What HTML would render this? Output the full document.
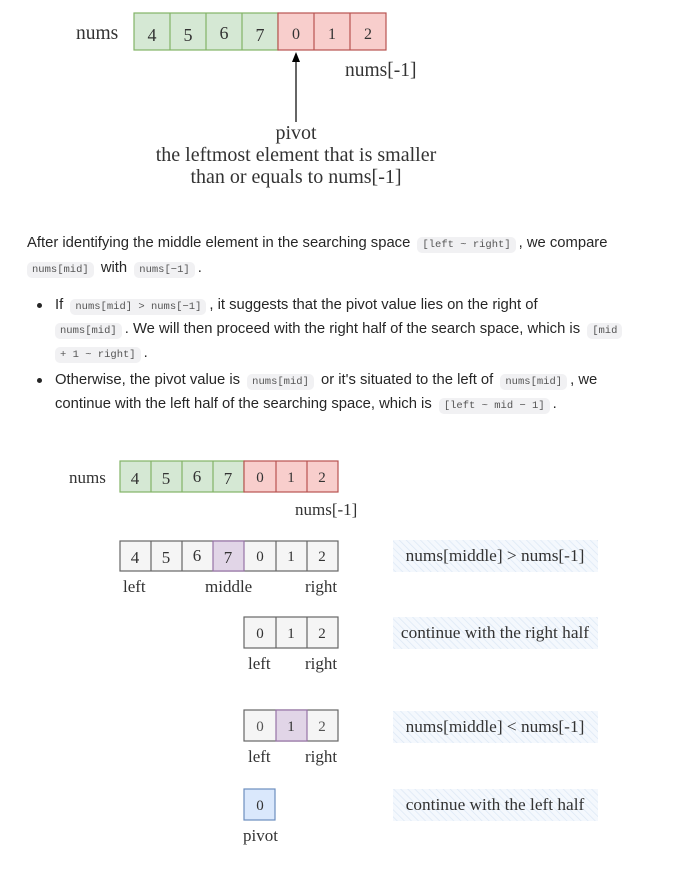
<!DOCTYPE html>
<html><head><meta charset="utf-8"><style>
html,body{margin:0;padding:0;background:#fff;width:681px;height:876px;overflow:hidden;position:relative}
.t{position:absolute;font-family:"Liberation Sans",sans-serif;font-size:14.8px;color:#262626;white-space:nowrap;line-height:20px}
code{font-family:"Liberation Mono",monospace;font-size:10.5px;color:#555;background:#f1f1f3;border-radius:5px;padding:2px 5px;margin:0 3px}
.b{position:absolute;width:5px;height:5px;border-radius:50%;background:#262626}
svg{position:absolute;left:0;top:0}
svg text{font-family:"Liberation Serif",serif;fill:#333}
</style></head><body>
<svg width="681" height="876" xmlns="http://www.w3.org/2000/svg">
<defs>
<pattern id="h" width="5" height="5" patternUnits="userSpaceOnUse" patternTransform="rotate(-45)">
<rect width="5" height="5" fill="#f4f8fd"/><line x1="0" y1="0" x2="0" y2="5" stroke="#dde8f5" stroke-width="1.5"/>
</pattern>
</defs>
<g stroke-width="1.2">
<rect x="134" y="13" width="144" height="37" fill="#d5e8d4" stroke="#82b366"/>
<line x1="170" y1="13" x2="170" y2="50" stroke="#82b366"/><line x1="206" y1="13" x2="206" y2="50" stroke="#82b366"/><line x1="242" y1="13" x2="242" y2="50" stroke="#82b366"/>
<rect x="278" y="13" width="108" height="37" fill="#f8cecc" stroke="#b85450"/>
<line x1="314" y1="13" x2="314" y2="50" stroke="#b85450"/><line x1="350" y1="13" x2="350" y2="50" stroke="#b85450"/>
</g>
<g font-size="18" text-anchor="middle">
<text x="152" y="41">4</text><text x="188" y="41">5</text><text x="224" y="39">6</text><text x="260" y="41">7</text>
<text x="296" y="39" font-size="16">0</text><text x="332" y="39" font-size="16">1</text><text x="368" y="39" font-size="16">2</text>
</g>
<text x="76" y="39" font-size="19.5">nums</text>
<text x="345" y="76" font-size="19.5">nums[-1]</text>
<line x1="296" y1="60" x2="296" y2="122" stroke="#000" stroke-width="1.2"/>
<path d="M292 62 L296 52 L300 62 Z" fill="#000"/>
<g font-size="20" text-anchor="middle">
<text x="296" y="139">pivot</text>
<text x="296" y="161">the leftmost element that is smaller</text>
<text x="296" y="183">than or equals to nums[-1]</text>
</g>
<g stroke-width="1.2">
<rect x="120" y="461" width="124" height="31" fill="#d5e8d4" stroke="#82b366"/>
<line x1="151" y1="461" x2="151" y2="492" stroke="#82b366"/><line x1="182" y1="461" x2="182" y2="492" stroke="#82b366"/><line x1="213" y1="461" x2="213" y2="492" stroke="#82b366"/>
<rect x="244" y="461" width="94" height="31" fill="#f8cecc" stroke="#b85450"/>
<line x1="276" y1="461" x2="276" y2="492" stroke="#b85450"/><line x1="307" y1="461" x2="307" y2="492" stroke="#b85450"/>
</g>
<g font-size="17" text-anchor="middle">
<text x="135" y="484">4</text><text x="166" y="484">5</text><text x="197" y="482">6</text><text x="228" y="484">7</text>
<text x="260" y="482" font-size="15">0</text><text x="291" y="482" font-size="15">1</text><text x="322" y="482" font-size="15">2</text>
</g>
<text x="69" y="483" font-size="17">nums</text>
<text x="295" y="515" font-size="17">nums[-1]</text>
<g stroke="#666" stroke-width="1.2">
<rect x="120" y="541" width="218" height="30" fill="#f5f5f5"/>
<rect x="213" y="541" width="31" height="30" fill="#e1d5e7" stroke="#9673a6"/>
<line x1="151" y1="541" x2="151" y2="571"/><line x1="182" y1="541" x2="182" y2="571"/><line x1="276" y1="541" x2="276" y2="571"/><line x1="307" y1="541" x2="307" y2="571"/>
</g>
<g font-size="17" text-anchor="middle" style="fill:#555">
<text x="135" y="563">4</text><text x="166" y="563">5</text><text x="197" y="561">6</text><text x="228" y="563">7</text>
<text x="260" y="561" font-size="15">0</text><text x="291" y="561" font-size="15">1</text><text x="322" y="561" font-size="15">2</text>
</g>
<text x="123" y="592" font-size="17">left</text><text x="205" y="592" font-size="17">middle</text><text x="305" y="592" font-size="17">right</text>
<rect x="393" y="540" width="205" height="32" fill="url(#h)"/>
<text x="495" y="561" font-size="17.3" text-anchor="middle">nums[middle] &gt; nums[-1]</text>
<g stroke="#666" stroke-width="1.2">
<rect x="244" y="617" width="94" height="31" fill="#f5f5f5"/>
<line x1="276" y1="617" x2="276" y2="648"/><line x1="307" y1="617" x2="307" y2="648"/>
</g>
<g font-size="15" text-anchor="middle" style="fill:#555">
<text x="260" y="638">0</text><text x="291" y="638">1</text><text x="322" y="638">2</text>
</g>
<text x="248" y="669" font-size="17">left</text><text x="305" y="669" font-size="17">right</text>
<rect x="393" y="617" width="205" height="32" fill="url(#h)"/>
<text x="495" y="638" font-size="17.3" text-anchor="middle">continue with the right half</text>
<g stroke="#666" stroke-width="1.2">
<rect x="244" y="710" width="94" height="31" fill="#f5f5f5"/>
<rect x="276" y="710" width="31" height="31" fill="#e1d5e7" stroke="#9673a6"/>
</g>
<g font-size="15" text-anchor="middle">
<text x="260" y="731" style="fill:#555">0</text><text x="291" y="731">1</text><text x="322" y="731" style="fill:#555">2</text>
</g>
<text x="248" y="762" font-size="17">left</text><text x="305" y="762" font-size="17">right</text>
<rect x="393" y="711" width="205" height="32" fill="url(#h)"/>
<text x="495" y="732" font-size="17.3" text-anchor="middle">nums[middle] &lt; nums[-1]</text>
<rect x="244" y="789" width="31" height="31" fill="#dae8fc" stroke="#6c8ebf" stroke-width="1.2"/>
<text x="260" y="810" font-size="15" text-anchor="middle">0</text>
<text x="243" y="841" font-size="17">pivot</text>
<rect x="393" y="789" width="205" height="32" fill="url(#h)"/>
<text x="495" y="810" font-size="17.3" text-anchor="middle">continue with the left half</text>
</svg>

<div class="t" style="left:27px;top:233px">After identifying the middle element in the searching space <code>[left ~ right]</code>, we compare</div>
<div class="t" style="left:27px;top:258px"><code style="margin-left:0">nums[mid]</code> with <code>nums[−1]</code>.</div>
<div class="b" style="left:37px;top:303px"></div>
<div class="t" style="left:55px;top:295px">If <code>nums[mid] &gt; nums[−1]</code>, it suggests that the pivot value lies on the right of</div>
<div class="t" style="left:55px;top:319px"><code style="margin-left:0">nums[mid]</code>. We will then proceed with the right half of the search space, which is <code>[mid</code></div>
<div class="t" style="left:55px;top:343px"><code style="margin-left:0">+ 1 ~ right]</code>.</div>
<div class="b" style="left:37px;top:378px"></div>
<div class="t" style="left:55px;top:370px">Otherwise, the pivot value is <code>nums[mid]</code> or it's situated to the left of <code>nums[mid]</code>, we</div>
<div class="t" style="left:55px;top:394px">continue with the left half of the searching space, which is <code>[left ~ mid − 1]</code>.</div>
</body></html>
